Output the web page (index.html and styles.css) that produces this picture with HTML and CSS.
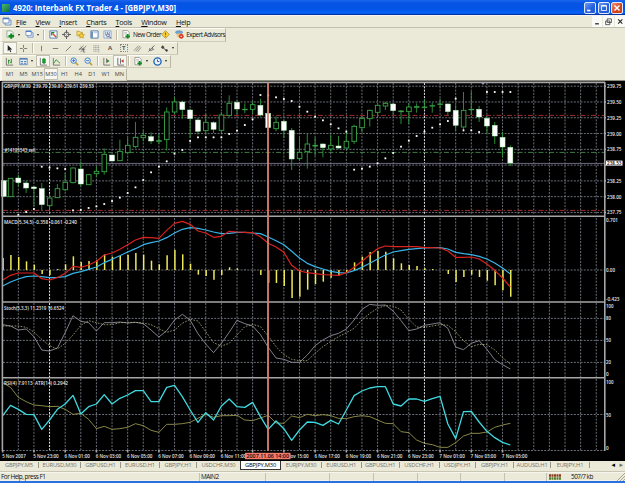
FILE: index.html
```html
<!DOCTYPE html>
<html>
<head>
  <title>4920: Interbank FX Trader 4 - [GBPJPY,M30]</title>
  <meta charset="UTF-8">
  <link rel="stylesheet" href="styles.css">
</head>
<body>
  <svg class="sprite" width="0" height="0">
    <symbol id="i-add" viewBox="0 0 10 10"><path d="M1 1h5l2 2v5H1z" fill="#f4f8f4" stroke="#6d8a70" stroke-width=".7"/><path d="M5.8 3.8v6M2.8 6.8h6.2" stroke="#0b8a1d" stroke-width="2.3"/></symbol>
    <symbol id="i-windows" viewBox="0 0 10 10"><path d="M3 3h6v5H3z" fill="#dfe9f7" stroke="#5f83b5" stroke-width=".8"/><path d="M1 1h6v5H1z" fill="#fff" stroke="#5f83b5" stroke-width=".8"/><path d="M1 1.6h6" stroke="#4e7fc9" stroke-width="1.4"/></symbol>
    <symbol id="i-market" viewBox="0 0 10 10"><path d="M1 1h8v8H1z" fill="#fff" stroke="#4d7cae" stroke-width="1"/><path d="M3 6V3h3" stroke="#178c2d" stroke-width="1.3" fill="none"/><path d="M4 4l4 4" stroke="#d24b2c" stroke-width="1.6"/></symbol>
    <symbol id="i-target" viewBox="0 0 10 10"><circle cx="5" cy="5" r="2.8" fill="none" stroke="#555"/><path d="M5 0v4M5 6v4M0 5h4M6 5h4" stroke="#555"/></symbol>
    <symbol id="i-nav" viewBox="0 0 10 10"><path d="M1 1.500h3l1 1h2v4H1z" fill="#f8dd70" stroke="#b08b1c" stroke-width=".7"/><path d="M6.200 3l1 2 2.200.3-1.600 1.500.4 2.200-2-1-2 1 .4-2.200L3 5.300 5.200 5z" fill="#fbd23c" stroke="#a77a10" stroke-width=".6"/></symbol>
    <symbol id="i-terminal" viewBox="0 0 10 10"><path d="M1 1h8v8H1z" fill="#fff" stroke="#4874ab"/><path d="M2.300 2v6.500" stroke="#4874ab" stroke-width="1.600"/><path d="M4 3h4" stroke="#a9c0df"/></symbol>
    <symbol id="i-tester" viewBox="0 0 10 10"><path d="M1 1h8v8H1z" fill="#eef4fc" stroke="#6f95c5" stroke-width=".8"/><path d="M3 2v4M5 2v3M7 2v3" stroke="#4e77aa" stroke-width=".8"/><circle cx="5.500" cy="6" r="1.700" fill="#cde" stroke="#446" stroke-width=".7"/><path d="M7 7.300l2 2" stroke="#446"/></symbol>
    <symbol id="i-order" viewBox="0 0 10 10"><path d="M1 .6h5l2 2v6H1z" fill="#fff" stroke="#777" stroke-width=".7"/><path d="M2.500 3h3M2.500 4.500h3" stroke="#888" stroke-width=".6"/><path d="M6.300 4.500v5M3.800 7h5" stroke="#0b8a1d" stroke-width="2"/></symbol>
    <symbol id="i-meta" viewBox="0 0 10 10"><path d="M5 .7L9.300 5 5 9.300.7 5z" fill="#f7cf3c" stroke="#a6801a" stroke-width=".7"/><path d="M5 2.800v2.800M5 6.500v1" stroke="#7b5c0c"/></symbol>
    <symbol id="i-expert" viewBox="0 0 10 10"><ellipse cx="4.500" cy="2.600" rx="4" ry="1.800" fill="#6aa4d8" stroke="#3b6fa0" stroke-width=".5"/><path d="M2 4h5v2.500L5 9 2 7z" fill="#f2bf72"/><circle cx="7" cy="7" r="2.600" fill="#d5311c"/><path d="M6 7h2" stroke="#fff"/></symbol>
    <symbol id="i-cursor" viewBox="0 0 10 10"><path d="M3 1v7l1.700-1.500L6 9.200l1-.5-1.200-2.500H8z" fill="#222"/></symbol>
    <symbol id="i-cross" viewBox="0 0 10 10"><path d="M5 1v3.300M5 5.700V9M1 5h3.300M5.700 5H9" stroke="#555" stroke-width=".8"/></symbol>
    <symbol id="i-vline" viewBox="0 0 10 10"><path d="M5 2v6" stroke="#555" stroke-width=".8"/></symbol>
    <symbol id="i-hline" viewBox="0 0 10 10"><path d="M2 5h6" stroke="#555" stroke-width=".8"/></symbol>
    <symbol id="i-trend" viewBox="0 0 10 10"><path d="M2 8l6-6" stroke="#555" stroke-width=".8"/></symbol>
    <symbol id="i-gann" viewBox="0 0 10 10"><path d="M1 7l5-5.500M3 9l6-7M1 5.500l7 .5M3 3l4 5M6 4v5h2" fill="none" stroke="#555" stroke-width=".7"/></symbol>
    <symbol id="i-fibo" viewBox="0 0 10 10"><path d="M1.500 2h7M1.500 4h7M1.500 6h7M1.500 8h5M7.500 7v2.500" stroke="#777" stroke-width=".7" stroke-dasharray="1.200 .5"/></symbol>
    <symbol id="i-channel" viewBox="0 0 10 10"><path d="M1 7.500l5-5.500M3 8.200l5-6M5 8.800l4-5" stroke="#666" stroke-width=".7"/></symbol>
    <symbol id="i-fork" viewBox="0 0 10 10"><path d="M1.500 8.500l7-7M3 4.500v2.500h3M6 3v3h2" fill="none" stroke="#555" stroke-width=".8"/></symbol>
    <symbol id="i-arrows" viewBox="0 0 10 10"><path d="M1 3.500L3 1.500l2 2-2 2z M5.500 7l2-1.500L9 7 7.500 9z" fill="#444"/><path d="M3 4l4 3" stroke="#444"/></symbol>
    <symbol id="i-bars" viewBox="0 0 10 10"><path d="M1.500 1v8H9" fill="none" stroke="#555" stroke-width=".8"/><path d="M4 3v4.500M7 2v5M4 4h1.500M5.600 6H7" stroke="#198a2a" stroke-width="1"/></symbol>
    <symbol id="i-table" viewBox="0 0 10 10"><path d="M.8 1.500h8.400v7H.8z" fill="#e8f0fb" stroke="#4d76aa" stroke-width=".8"/><path d="M1 2.200h8" stroke="#4d76aa" stroke-width="1.400"/><path d="M2 5h2.500M5.500 5H8M2 7h2.500M5.500 7H8" stroke="#4d76aa" stroke-width="1"/></symbol>
    <symbol id="i-candle" viewBox="0 0 10 10"><path d="M1.500 1v8H9" fill="none" stroke="#555" stroke-width=".8"/><path d="M5.500 1v7" stroke="#087c18" stroke-width=".8"/><path d="M4 2.200h3v4.500H4z" fill="#17a32c" stroke="#087c18" stroke-width=".6"/></symbol>
    <symbol id="i-line" viewBox="0 0 10 10"><path d="M1.500 1v8H9" fill="none" stroke="#555" stroke-width=".8"/><path d="M2 7l2.500-4L9 7" fill="none" stroke="#198a2a" stroke-width=".9"/></symbol>
    <symbol id="i-zoomin" viewBox="0 0 10 10"><path d="M6.300 6.300l2.700 2.700" stroke="#c39a24" stroke-width="1.700"/><circle cx="4" cy="4" r="3" fill="#e4f1ff" stroke="#3779c3"/><path d="M4 2.400v3.200M2.400 4h3.200" stroke="#2463a9" stroke-width=".9"/></symbol>
    <symbol id="i-zoomout" viewBox="0 0 10 10"><path d="M6.300 6.300l2.700 2.700" stroke="#c39a24" stroke-width="1.700"/><circle cx="4" cy="4" r="3" fill="#e4f1ff" stroke="#3779c3"/><path d="M2.400 4h3.200" stroke="#2463a9" stroke-width=".9"/></symbol>
    <symbol id="i-scroll" viewBox="0 0 10 10"><path d="M2 1v8h7M5 1.500v5" fill="none" stroke="#555" stroke-width=".8"/><path d="M5.500 2.500l3 2-3 2z" fill="#189a2d"/></symbol>
    <symbol id="i-shift" viewBox="0 0 10 10"><path d="M2 1v8h7M5 1.500v6" fill="none" stroke="#555" stroke-width=".9"/><path d="M8.500 2.500l-3 2 3 2z" fill="#c23626"/></symbol>
    <symbol id="i-clock" viewBox="0 0 10 10"><circle cx="5" cy="5" r="4" fill="#e8f3ff" stroke="#1e62b5" stroke-width="1.500"/><path d="M5 2.700V5h2" fill="none" stroke="#223" stroke-width=".8"/></symbol>
  </svg>

  <div class="titlebar">
    <span class="app-icon"></span>
    <svg class="title-text" width="170" height="14"><text x="0" y="10.200" textLength="163" lengthAdjust="spacingAndGlyphs">4920: Interbank FX Trader 4 - [GBPJPY,M30]</text></svg>
    <div class="win-buttons">
      <span class="win"><svg viewBox="0 0 12 12"><path d="M2.500 9h4" stroke="#fff" stroke-width="2"/></svg></span>
      <span class="win"><svg viewBox="0 0 12 12"><path d="M3 3.500h6v5.500H3z" stroke="#fff" fill="none"/><path d="M3 3.200h6" stroke="#fff" stroke-width="1.500"/></svg></span>
      <span class="win close"><svg viewBox="0 0 12 12"><path d="M3 3l6 6M9 3L3 9" stroke="#fff" stroke-width="1.800"/></svg></span>
    </div>
  </div>

  <div class="menubar">
    <svg class="menu-icon"><use href="#i-windows"/></svg>
    <span><u>F</u>ile</span><span><u>V</u>iew</span><span><u>I</u>nsert</span><span><u>C</u>harts</span><span><u>T</u>ools</span><span><u>W</u>indow</span><span><u>H</u>elp</span>
    <div class="mdi">
      <svg viewBox="0 0 10 10"><path d="M3 7.200h3.500" stroke="#222" stroke-width="1.200"/></svg>
      <svg viewBox="0 0 10 10"><path d="M4 2.500h4v3.500H4zM2.500 4.500h4V8h-4z" stroke="#444" stroke-width=".8" fill="#fff"/></svg>
      <svg viewBox="0 0 10 10"><path d="M3 3l4 4M7 3L3 7" stroke="#222"/></svg>
    </div>
  </div>

  <div class="toolbars">
    <div class="toolbar first">
      <i class="drop"><svg><use href="#i-add"/></svg></i><i class="drop"><svg><use href="#i-windows"/></svg></i><b></b>
      <i><svg><use href="#i-market"/></svg></i><i><svg><use href="#i-target"/></svg></i><i><svg><use href="#i-nav"/></svg></i><i><svg><use href="#i-terminal"/></svg></i><i><svg><use href="#i-tester"/></svg></i><b></b>
      <i><svg><use href="#i-order"/></svg></i><span class="order">New Order</span><i><svg><use href="#i-meta"/></svg></i><i><svg><use href="#i-expert"/></svg></i><span class="expert">Expert Advisors</span>
    </div>
    <div class="toolbar">
      <i class="on"><svg><use href="#i-cursor"/></svg></i><i><svg><use href="#i-cross"/></svg></i><b></b>
      <i><svg><use href="#i-vline"/></svg></i><i><svg><use href="#i-hline"/></svg></i><i><svg><use href="#i-trend"/></svg></i><i><svg><use href="#i-gann"/></svg></i><i><svg><use href="#i-fibo"/></svg></i><i class="letter">A</i><i class="letter"><span class="boxed">T</span></i><i><svg><use href="#i-channel"/></svg></i><i><svg><use href="#i-fork"/></svg></i><i class="drop"><svg><use href="#i-arrows"/></svg></i>
    </div>
    <div class="toolbar">
      <i><svg><use href="#i-bars"/></svg></i><i class="drop"><svg><use href="#i-table"/></svg></i><i class="on"><svg><use href="#i-candle"/></svg></i><i><svg><use href="#i-line"/></svg></i><b></b>
      <i><svg><use href="#i-zoomin"/></svg></i><i><svg><use href="#i-zoomout"/></svg></i><b></b>
      <i><svg><use href="#i-scroll"/></svg></i><i class="on"><svg><use href="#i-shift"/></svg></i><b></b>
      <i class="drop"><svg><use href="#i-order"/></svg></i><i class="drop"><svg><use href="#i-clock"/></svg></i>
    </div>
    <div class="toolbar periods">
      <i>M1</i><i>M5</i><i>M15</i><i class="on">M30</i><i>H1</i><i>H4</i><i>D1</i><i>W1</i><i>MN</i>
    </div>
  </div>

  <svg id="chart" class="chart" width="625" height="380" viewBox="0 81 625 380"></svg>

  <div class="tabs">
    <span>GBPJPY,M5</span><span>EURUSD,M30</span><span>GBPUSD,H1</span><span>EURUSD,H1</span><span>GBPJPY,H1</span><span>USDCHF,M30</span><span class="active">GBPJPY,M30</span><span>EURJPY,M30</span><span>EURUSD,H1</span><span>GBPUSD,H1</span><span>USDCHF,H1</span><span>USDJPY,H1</span><span>GBPJPY,H1</span><span>AUDUSD,H1</span><span>EURJPY,H1</span>
    <em class="dark">◂</em><em>▸</em>
  </div>
  <div class="status">
    <span>For Help, press F1</span><span>MAIN2</span><span></span><span></span><span></span><span></span><span></span><span></span>
    <span class="traffic"><svg width="12" height="6" viewBox="0 0 12 6"><path d="M0 1.500h12" stroke="#8c3b20" stroke-width="2.500" stroke-dasharray="2 .5"/><path d="M0 4.500h12" stroke="#55802c" stroke-width="2.500" stroke-dasharray="2 .5"/></svg>507/7 kb</span>
    <svg class="grip" width="8" height="8" viewBox="0 0 8 8"><path d="M0 8l8-8M3 8l5-5M6 8l2-2" stroke="#aaa690" stroke-width="1"/></svg>
  </div>

  <script src="chart.js"></script>
</body>
</html>
```

FILE: styles.css
```css
body { margin: 0; width: 625px; height: 483px; overflow: hidden; display: flex; flex-direction: column; background: #ebe9d8; font: 6.8px "Open Sans", "Noto Sans", sans-serif; color: #111; }
.sprite { position: absolute; }

.titlebar { height: 15px; flex: none; display: flex; align-items: center; box-sizing: border-box; background: linear-gradient(#1c66ee, #0554e4 20%, #0454e6 60%, #0664fc 88%, #0136a8 95%); }
.app-icon { width: 8px; height: 8px; margin: 0 3px 0 2px; background: linear-gradient(135deg, #4cb86e, #0d6c3c); }
.title-text text { font: bold 8px "Open Sans", sans-serif; fill: #fff; }
.win-buttons { margin-left: auto; display: flex; gap: 1.5px; padding-right: 2px; }
.win { width: 12px; height: 12px; box-sizing: border-box; border: 1px solid #dfe9fc; border-radius: 2px; background: linear-gradient(135deg, #6f9cf5, #245edb 60%); display: flex; }
.win.close { background: linear-gradient(135deg, #ee9477, #d2421a 60%); }

.menubar { height: 13px; flex: none; display: flex; align-items: center; border-bottom: 1px solid #c2bfae; border-top: 1px solid #f5f4ee; box-sizing: border-box; font-size: 7.2px; letter-spacing: -.3px; }
.menubar span { margin-right: 9.3px; }
.menubar u { text-underline-offset: 1px; text-decoration-thickness: .6px; }
.menu-icon { width: 10px; height: 10px; margin: 0 4px 0 2px; }
.mdi { margin-left: auto; display: flex; gap: 1px; height: 11px; }
.mdi svg { width: 10.5px; height: 11px; background: #fafaf6; }

.toolbars { height: 53px; flex: none; border-bottom: 1px solid #8d8b7e; box-sizing: border-box; display: flex; flex-direction: column; align-items: flex-start; }
.toolbar { height: 13px; display: flex; align-items: center; box-sizing: border-box; padding-left: 1px; border-left: 2px solid #f7f6ef; border-right: 1px solid #b9b6a4; border-bottom: 1px solid #cfccba; border-top: 1px solid #fbfaf4; }
.toolbar.first { height: 13.5px; }
.toolbar i { width: 13.7px; height: 12px; flex: none; font-style: normal; display: flex; align-items: center; justify-content: center; box-sizing: border-box; }
.toolbar i svg { width: 9px; height: 9px; flex: none; }
.toolbar i.drop { width: 19.5px; justify-content: flex-start; padding-left: 2.5px; }
.toolbar i.drop::after { content: ""; margin-left: 3px; border: 1.5px solid transparent; border-top: 2px solid #222; border-bottom: 0; }
.toolbar b { width: 2px; height: 10px; margin: 0 1.2px; background: #bdbaa8; border-right: 1px solid #fff; box-sizing: border-box; }
.toolbar .on { background: #f8f7f2; border: 1px solid #c2bfaf; }
.toolbar .letter { font-size: 6px; font-weight: bold; color: #555; }
.boxed { border: 1px dotted #888; width: 6px; line-height: 6px; text-align: center; }
.order { width: 26px; letter-spacing: -.5px; white-space: nowrap; font-size: 6.4px; }
.expert { width: 39px; letter-spacing: -.5px; white-space: nowrap; font-size: 6.4px; }
.periods { font-size: 5.6px; color: #444; }

.chart { display: block; flex: none; background: #000; }
.chart text { font-family: "Open Sans", sans-serif; font-weight: 600; fill: #e6e6e6; font-size: 5.4px; }
.grid { stroke: #858a96; stroke-width: .8; stroke-dasharray: 2 1.3; }
.grid.day { stroke: #e4e8f0; stroke-width: 1; }
.frame { stroke: #a6a6a6; stroke-width: 1.6; }
.stop { stroke: #a02a2a; stroke-width: 1; stroke-dasharray: 5 2 1.5 2; }
.entry { stroke: #4d9a55; stroke-width: .8; stroke-dasharray: 5 2 1.5 2; }
.bid { stroke: #6c6880; stroke-width: 1; }
.wick { stroke: #2f9a3a; stroke-width: .9; }
.up { fill: #000; stroke: #3aa346; stroke-width: .9; }
.down { fill: #fff; stroke: #a7eeb0; stroke-width: .5; }
.sar { fill: #fff; }
.hist { stroke: #efe95c; stroke-width: 1.5; }
.plot { fill: none; stroke-width: 1.2; stroke-linejoin: round; }
.macd { stroke: #d8231f; }
.signal { stroke: #38b4e8; }
.stoch { stroke: #8f8d98; stroke-width: .9; }
.stoch-signal { stroke: #b5b48c; stroke-width: .8; stroke-dasharray: 1.6 1.4; }
.rsi { stroke: #3fd9e0; stroke-width: 1.3; }
.atr { stroke: #96944e; stroke-width: .9; }
.cross { stroke: #d67f6d; stroke-width: 2; opacity: .9; }
.tag { fill: #f47c6c; }
.chart text.dark { fill: #200; }

.tabs { height: 11px; flex: none; display: grid; grid-template-columns: 39px 42px 40px 39px 37px 43px 41px 41px 39.5px 38.5px 39.5px 36.5px 38px 37px 39px 25px 8px; font-size: 5.8px; color: #77756a; border-bottom: 1px solid #c9c6b4; box-sizing: border-box; overflow: hidden; }
.tabs span { text-align: center; white-space: nowrap; letter-spacing: -.2px; height: 6px; margin-top: 1px; line-height: 6px; border-right: 1px solid #98968a; }
.tabs span:nth-child(6) { border: 0; }
.tabs .active { background: #fff; color: #000; border: 1px solid #333; border-top: 0; margin-top: 0; height: 9px; line-height: 8px; box-sizing: border-box; }
.tabs em { font: 7px "DejaVu Sans", sans-serif; line-height: 8px; text-align: right; }
.tabs em.dark { color: #000; }

.status { height: 9px; flex: none; display: grid; grid-template-columns: 200px 65.5px 64px 44px 44px 43px 44px 42.5px 70px 8px; line-height: 8px; border-bottom: 1px solid #f4f3ea; box-sizing: border-box; border-top: 1px solid #f6f5ee; font-size: 6.4px; letter-spacing: -.5px; box-shadow: 0 3px #2b6fe0; }
.status span { border-right: 1px solid #c4c1b0; padding-left: 1px; white-space: nowrap; }
.status .traffic { border: 0; display: flex; align-items: center; gap: 10px; padding-left: 2px; }
```

FILE: chart.js
```js
const svg = document.getElementById("chart");
let out = "";

// bar positions
const bx = i => +(2.7 + i * 7.81).toFixed(2);
// plotted values are thirds of a pixel below the pane origin
const py = (top, v) => +(top + v / 3).toFixed(2);

function line(x1, y1, x2, y2, cls) {
  out += `<line class="${cls}" x1="${x1}" y1="${y1}" x2="${x2}" y2="${y2}"/>`;
}
function rect(x, y, w, h, cls) {
  out += `<rect class="${cls}" x="${x}" y="${y}" width="${w}" height="${h}"/>`;
}
function text(x, y, s, w, cls) {
  out += `<text class="${cls || ""}" x="${x}" y="${y}" textLength="${w}" lengthAdjust="spacingAndGlyphs">${s}</text>`;
}
function plot(top, values, cls) {
  out += `<polyline class="plot ${cls}" points="${values.map((v, i) => bx(i) + "," + py(top, v)).join(" ")}"/>`;
}

// grid
for (let i = 2; i < 77; i += 2) {
  const cls = i == 6 || i == 54 ? "grid day" : "grid";
  line(bx(i), 83, bx(i), 215, cls);
  line(bx(i), 218, bx(i), 301, cls);
  line(bx(i), 303, bx(i), 377, cls);
  line(bx(i), 379, bx(i), 450, cls);
}
for (let i = 0; i < 9; i++) {
  const y = 86.2 + i * 15.78;
  line(3, y, 604, y, "grid");
  line(604, y, 606, y, "frame");
  if (i != 5) text(607, y + 2, (239.75 - i * 0.25).toFixed(2), 14.5);
}
[270, 318.4, 340.4, 362.4, 414.5, 450.5].forEach(y => line(3, y, 604, y, "grid"));

line(3, 115.4, 604, 115.4, "stop");
line(3, 210.4, 604, 210.4, "stop");
line(3, 152.4, 604, 152.4, "entry");
line(3, 163.4, 604, 163.4, "bid");

// high, body top, body bottom, low, 1 = bearish
const candles = [
  [308,308,355,355,1],[301,301,356,356,0],[290,300,314,325,1],[308,315,330,345,1],[325,327,332,385,1],
  [315,332,380,398,1],[348,360,383,398,0],[318,332,359,359,0],[285,313,335,340,0],[268,270,314,316,0],
  [250,273,318,325,1],[288,290,320,320,0],[266,280,287,297,0],[211,229,281,290,0],[231,231,249,250,1],
  [185,220,248,248,0],[178,202,224,224,0],[132,178,206,210,0],[158,172,179,190,0],[163,176,189,198,1],
  [168,188,190,198,0],[88,102,185,218,0],[57,72,102,108,0],[68,72,95,122,1],[92,96,122,180,1],
  [120,126,160,170,1],[108,133,158,170,0],[130,134,154,165,1],[102,111,157,165,0],[52,76,112,118,0],
  [66,73,93,110,1],[76,94,95,106,0],[70,80,94,108,0],[62,82,111,116,1],[104,106,149,151,1],
  [115,133,152,160,0],[125,130,157,180,1],[150,157,243,276,1],[178,223,242,244,0],[166,198,221,272,0],
  [178,202,204,233,0],[196,198,209,238,1],[170,202,213,220,0],[174,204,210,212,1],[158,190,210,212,0],
  [140,145,190,198,0],[114,121,149,163,0],[95,97,122,146,0],[80,82,103,115,0],[72,76,84,96,0],
  [75,78,98,110,1],[96,99,101,138,0],[76,87,101,138,0],[76,86,88,104,0],[64,87,88,94,0],
  [74,83,84,104,0],[62,78,79,92,0],[76,78,101,112,1],[80,97,142,160,1],[42,97,147,160,0],
  [40,94,95,112,0],[84,94,117,132,1],[116,121,144,166,1],[132,142,174,198,1],[162,178,207,238,1],[202,208,255,264,1]
];
candles.forEach(([h, t, b, l, down], i) => {
  const x = i ? bx(i) : bx(0) + 1;
  line(x, py(78, h), x, py(78, l), "wick");
  rect(x - (down ? 2.5 : 2.2), py(78, t), down ? 5 : 4.6, Math.max((b - t) / 3, .4), down ? "down" : "up");
});

const sar = [411,402,393,266,269,271,273,397,396,390,385,378,369,359,345,328,306,283,266,250,227,216,189,178,178,178,178,168,158,141,124,51,52,58,63,69,86,101,116,127,139,151,161,275,272,266,256,241,225,206,188,174,161,149,139,129,62,157,157,162,42,42,42,42];
sar.forEach((v, i) => rect(bx(i + 2) - .9, py(78, v) - .9, 1.8, 1.8, "sar"));

// MACD
const hist = [132,123,129,142,152,180,183,165,151,127,144,141,138,121,128,126,122,117,122,140,151,124,107,121,149,182,186,197,183,160,163,167,169,183,207,207,216,252,248,227,210,203,191,186,175,145,128,114,110,113,133,148,153,156,163,165,168,180,204,189,182,189,200,214,229,248];
hist.forEach((v, i) => line(bx(i) + .4, 270, bx(i) + .4, py(214, v), "hist"));
plot(214, [216,204,195,188,186,188,191,190,188,178,173,166,159,146,136,125,114,104,92,86,81,71,57,46,41,43,48,54,59,58,55,55,57,59,69,80,92,112,132,148,158,165,172,176,177,170,160,148,135,123,114,110,106,104,102,101,101,105,115,119,122,127,135,147,162,180], "signal");
plot(214, [198,184,177,177,177,194,198,191,178,157,160,153,142,123,117,106,92,78,70,71,73,49,28,22,31,51,57,70,67,52,54,55,56,68,88,99,115,154,171,176,179,182,183,184,176,160,142,122,104,96,98,98,98,98,101,101,102,111,130,130,129,135,150,169,192,219], "macd");

// Stochastic
plot(300, [74,78,90,87,110,150,153,144,98,47,64,68,93,68,68,66,69,67,71,90,111,92,60,43,60,101,132,158,130,97,61,71,78,104,142,174,178,187,187,165,137,120,107,100,87,60,28,13,16,15,33,62,92,87,76,72,68,85,141,149,130,122,148,179,194,207], "stoch");
plot(300, [78,78,78,82,96,118,137,147,130,105,76,62,68,74,74,68,67,67,69,74,86,97,90,70,58,63,95,128,138,130,105,80,73,80,108,140,164,178,182,182,160,140,124,110,98,85,60,40,25,17,18,30,58,81,82,78,74,76,95,122,140,133,134,150,173,192], "stoch-signal");

// RSI and ATR
plot(300, [248,262,292,305,315,317,320,319,328,343,340,358,386,379,388,386,382,371,377,391,397,373,373,371,367,355,343,352,347,347,346,360,362,354,346,369,370,348,353,343,347,344,347,355,356,350,347,350,360,370,371,395,398,420,430,434,442,442,428,408,400,400,396,382,375,370], "atr");
plot(300, [347,316,328,343,344,388,360,328,312,286,342,320,312,284,312,295,285,272,272,305,305,262,256,290,330,367,338,360,318,297,320,322,307,350,388,363,386,421,390,366,367,376,361,372,330,287,273,264,260,260,312,318,297,297,304,296,289,372,416,335,334,366,394,413,427,435], "rsi");

// frames
line(2, 82.4, 605, 82.4, "frame");
line(2.4, 82, 2.4, 451, "frame");
line(604.8, 82, 604.8, 451, "frame");
[216.2, 302, 377.8].forEach(y => line(2, y, 605, y, "frame"));
out += '<path d="M481 82.500h4l-2 2.500z" fill="#98a2b2"/>';

// pane titles and scales
text(4, 88, "GBPJPY,M30&#160; 239.70 239.81 239.51 239.53", 90);
text(4.5, 151.5, "#14195343 sell", 31);
text(4, 223.8, "MACD(5,34,5) -0.358 -0.061 -0.240", 73);
text(4, 309.6, "Stoch(5,3,3) 11.2319 16.6524", 60);
text(4, 385.4, "RSI(4) 7.9113&#160; ATR(14) 0.2942", 64);
rect(606, 160.6, 16.5, 5, "price-tag sar");
text(607, 165.1, "238.53", 14.5, "dark");
text(606, 222.4, "0.701", 12);
text(606, 271.8, "0.00", 9);
text(606, 300.6, "-0.423", 13.5);
text(606, 308.3, "100", 7.5);
text(606, 320.3, "80", 5);
text(606, 342.4, "50", 5);
text(606, 364.4, "20", 5);
text(606, 376.2, "0", 2.7);
text(606, 384.2, "100", 7.5);
text(606, 416.6, "50", 5);
text(606, 450, "0", 2.7);

// time scale, the 13:00 label is under the crosshair tag
["5 Nov 2007", "5 Nov 23:00", "6 Nov 01:00", "6 Nov 03:00", "6 Nov 05:00", "6 Nov 07:00", "6 Nov 09:00", "6 Nov 11:00", "6 Nov 13:00",
 "6 Nov 15:00", "6 Nov 17:00", "6 Nov 19:00", "6 Nov 21:00", "6 Nov 23:00", "7 Nov 01:00", "7 Nov 03:00", "7 Nov 05:00"].forEach((s, i) => {
  line(bx(i * 4), 450, bx(i * 4), 452.5, "frame");
  if (i != 8) text(bx(i * 4) - (i ? .7 : .5), 457.6, s, i ? 25.5 : 23.5);
});

line(268, 83, 268, 451, "cross");
rect(245, 452.8, 45.5, 6.4, "tag");
text(246.5, 457.9, "2007.11.06 14:00", 42.5, "dark");

svg.innerHTML = out;
```
